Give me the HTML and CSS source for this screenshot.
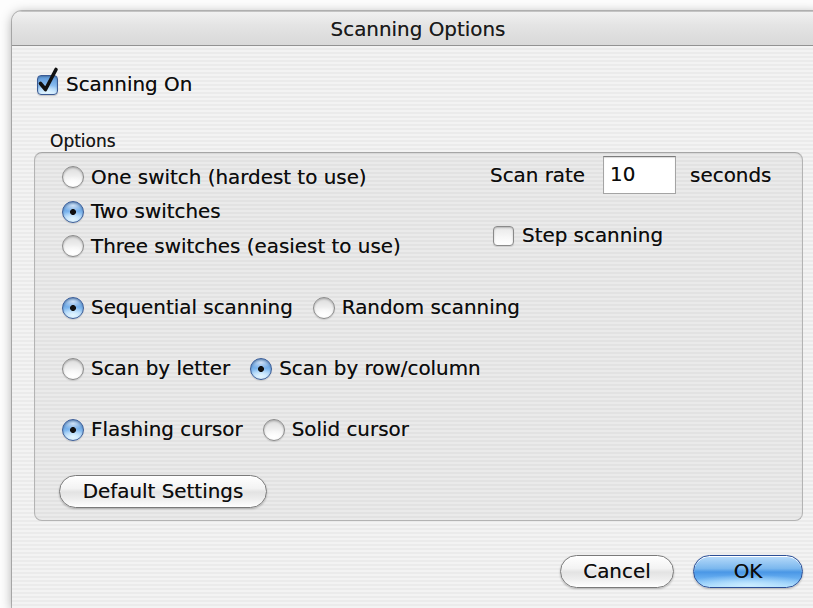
FILE: index.html
```html
<!DOCTYPE html>
<html lang="en">
<head>
<meta charset="utf-8">
<title>Scanning Options</title>
<link rel="stylesheet" href="styles.css">
</head>
<body>
<div class="desk">
  <div class="window">
    <div class="titlebar">Scanning Options</div>
    <div class="pane">
      <div class="check-row master">
        <span class="checkbox on">
          <svg class="tick" viewBox="0 0 24 28" width="24" height="28"><path d="M4.5 16.5 L9.5 22.5 L20 2.5" fill="none" stroke="#111" stroke-width="3.6" stroke-linecap="round" stroke-linejoin="round"/></svg>
        </span>
        <span>Scanning On</span>
      </div>

      <div class="group-label">Options</div>
      <div class="group">
        <div class="top">
          <div class="col">
            <div class="opt"><span class="radio"></span><span>One switch (hardest to use)</span></div>
            <div class="opt"><span class="radio on"></span><span>Two switches</span></div>
            <div class="opt"><span class="radio"></span><span>Three switches (easiest to use)</span></div>
          </div>
          <div class="side">
            <div class="rate">
              <span>Scan rate</span>
              <span class="field">10</span>
              <span>seconds</span>
            </div>
            <div class="check-row step">
              <span class="checkbox"></span>
              <span>Step scanning</span>
            </div>
          </div>
        </div>

        <div class="opt-row first">
          <div class="opt"><span class="radio on"></span><span>Sequential scanning</span></div>
          <div class="opt"><span class="radio"></span><span>Random scanning</span></div>
        </div>
        <div class="opt-row">
          <div class="opt"><span class="radio"></span><span>Scan by letter</span></div>
          <div class="opt"><span class="radio on"></span><span>Scan by row/column</span></div>
        </div>
        <div class="opt-row">
          <div class="opt"><span class="radio on"></span><span>Flashing cursor</span></div>
          <div class="opt"><span class="radio"></span><span>Solid cursor</span></div>
        </div>

        <button class="btn defaults" type="button">Default Settings</button>
      </div>

      <div class="actions">
        <button class="btn cancel" type="button">Cancel</button>
        <button class="btn ok" type="button">OK</button>
      </div>
    </div>
  </div>
</div>
</body>
</html>
```
FILE: styles.css
```css
* { box-sizing: border-box; }

html, body { margin: 0; }

body {
  width: 813px;
  height: 608px;
  overflow: hidden;
  background: #fdfdfd;
  font-family: "DejaVu Sans", "Liberation Sans", sans-serif;
  font-size: 19.9px;
  color: #0c0c0c;
  text-shadow: 0 0 0.4px rgba(0, 0, 0, 0.5);
}

.desk {
  height: 608px;
  padding: 11px 0 0 12px;
}

/* sheet window */
.window {
  width: 812px;
  height: 597px;
  border-radius: 10px 10px 0 0;
  overflow: hidden;
  box-shadow: 0 0 0 1px rgba(0, 0, 0, 0.22), 0 2px 12px rgba(0, 0, 0, 0.35);
}

.titlebar {
  height: 35px;
  line-height: 35px;
  text-align: center;
  background: linear-gradient(#f1f1f1, #e4e4e4 40%, #d9d9d9);
  border-top: 1px solid #c4c4c4;
  border-bottom: 1px solid #929292;
  color: #1a1a1a;
}

/* pinstriped content area */
.pane {
  height: 562px;
  padding: 28px 0 0 22px;
  background: repeating-linear-gradient(to bottom, #f3f3f3 0 2px, #ebebeb 2px 4px);
}

.check-row {
  display: flex;
  align-items: center;
  height: 22px;
  line-height: 22px;
}

.master {
  margin-left: 3px;
  gap: 8px;
}

.checkbox {
  position: relative;
  flex: 0 0 auto;
  width: 21px;
  height: 20px;
  border-radius: 4px;
  border: 1px solid #8a8a8a;
  background: linear-gradient(#e8e8e8, #f8f8f8 60%, #ffffff);
  box-shadow: inset 0 1px 2px rgba(0, 0, 0, 0.22), 0 1px 1px rgba(0, 0, 0, 0.12);
}

.checkbox.on {
  border-color: #3a5a94;
  background:
    radial-gradient(ellipse 70% 40% at 50% 90%, #dff3ff, transparent),
    linear-gradient(#5d97d8, #7fb5ec 45%, #a9d4fb 80%, #d2ecff);
  box-shadow: inset 0 1px 2px rgba(0, 0, 0, 0.25), 0 1px 1px rgba(0, 0, 0, 0.18);
}

/* check mark rises past the box edge */
.tick {
  position: absolute;
  left: -2px;
  top: -9px;
  overflow: visible;
}

.group-label {
  margin: 35px 0 1px 16px;
  font-size: 17px;
  line-height: 20px;
  color: #151515;
}

.group {
  width: 769px;
  height: 369px;
  padding: 3px 0 0 27px;
  border: 1px solid #b3b3b3;
  border-top-color: #a6a6a6;
  border-radius: 8px;
  background: rgba(0, 0, 0, 0.035);
  box-shadow: inset 0 1px 2px rgba(0, 0, 0, 0.06);
}

.top {
  display: flex;
}

.col {
  width: 428px;
  margin-top: 4px;
}

.opt {
  display: flex;
  align-items: center;
  gap: 7px;
  height: 34.5px;
  white-space: nowrap;
}

.radio {
  flex: 0 0 auto;
  width: 22px;
  height: 22px;
  border-radius: 50%;
  border: 1px solid #8b8b8b;
  background:
    radial-gradient(ellipse 60% 40% at 50% 85%, #ffffff, transparent),
    linear-gradient(#dcdcdc, #f2f2f2 55%, #fdfdfd);
  box-shadow: inset 0 1px 2px rgba(0, 0, 0, 0.25), 0 1px 1px rgba(0, 0, 0, 0.12);
}

.radio.on {
  border-color: #3b5d98;
  background:
    radial-gradient(circle at 50% 50%, #111 0 2.6px, transparent 3.3px),
    radial-gradient(ellipse 60% 40% at 50% 85%, #e2f5ff, transparent),
    radial-gradient(ellipse 55% 30% at 50% 18%, rgba(255, 255, 255, 0.7), transparent),
    linear-gradient(#4f8dd6, #7db6ee 50%, #b6dcfd 85%, #d4edff);
}

.side {
  display: flex;
  flex-direction: column;
}

.rate {
  display: flex;
  align-items: center;
  height: 38px;
  white-space: nowrap;
}

.field {
  width: 73px;
  height: 38px;
  margin: 0 14px 0 18px;
  padding-left: 6px;
  line-height: 36px;
  background: #fff;
  border: 1px solid #a4a4a4;
  border-top-color: #7c7c7c;
  box-shadow: inset 0 1px 1px rgba(0, 0, 0, 0.15);
}

.step {
  margin: 31px 0 0 3px;
  gap: 8px;
}

.opt-row {
  display: flex;
  gap: 20px;
  margin-top: 26.5px;
}

.opt-row.first {
  margin-top: 27px;
}

.btn {
  display: block;
  height: 33px;
  padding: 0;
  border-radius: 17px;
  border: 1px solid #7a7a7a;
  font: inherit;
  line-height: 31px;
  color: #0c0c0c;
  text-shadow: 0 0 0.4px rgba(0, 0, 0, 0.5);
  background: linear-gradient(#ffffff, #f3f3f3 40%, #e3e3e3 52%, #eeeeee 75%, #ffffff);
  box-shadow: 0 1px 2px rgba(0, 0, 0, 0.25), inset 0 1px 0 #fff;
}

.defaults {
  width: 208px;
  margin: 28px 0 0 -3px;
}

.actions {
  display: flex;
  justify-content: flex-end;
  gap: 19px;
  width: 769px;
  margin-top: 34px;
}

.cancel {
  width: 114px;
}

.ok {
  width: 110px;
  border-color: #2c4f96;
  background:
    radial-gradient(ellipse 60% 35% at 50% 95%, #c9ecff, transparent),
    linear-gradient(#b8dbfa, #7cb8ee 40%, #4a97e6 52%, #6cb2f2 75%, #a9dcff);
}
```
